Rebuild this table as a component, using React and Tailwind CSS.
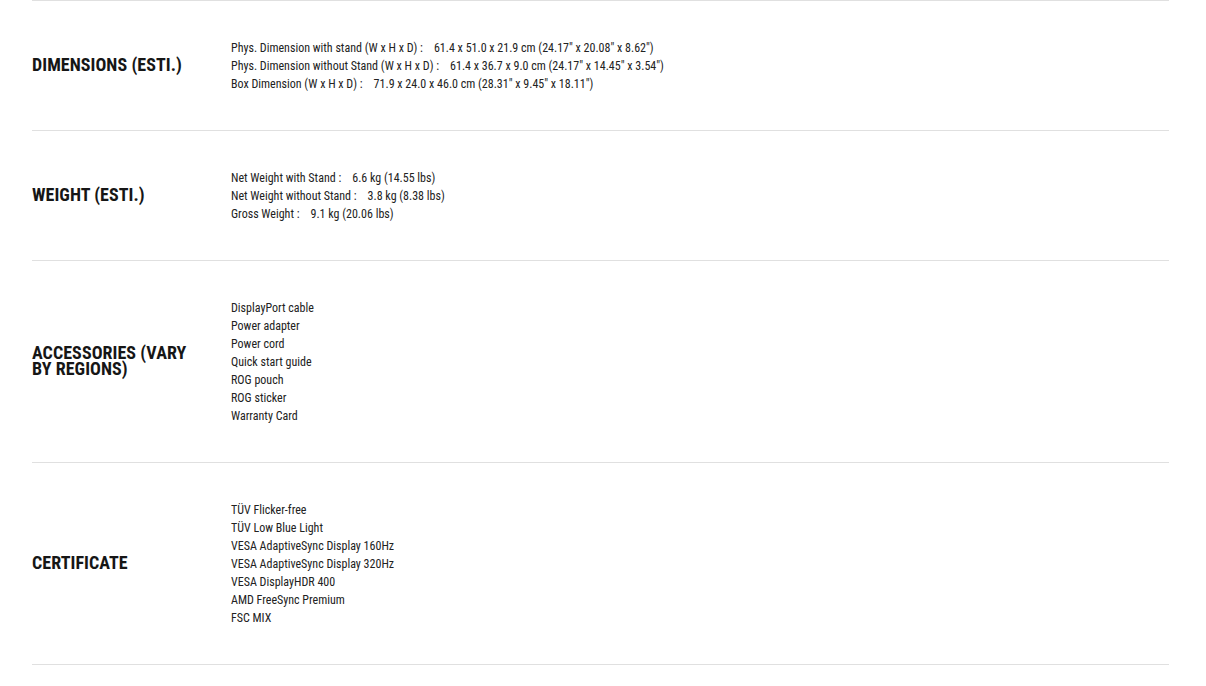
const specs = [
  {
    title: "Dimensions (Esti.)",
    items: [
      'Phys. Dimension with stand (W x H x D) :\u00a0\u00a0\u00a0 61.4 x 51.0 x 21.9 cm (24.17" x 20.08" x 8.62")',
      'Phys. Dimension without Stand (W x H x D) :\u00a0\u00a0\u00a0 61.4 x 36.7 x 9.0 cm (24.17" x 14.45" x 3.54")',
      'Box Dimension (W x H x D) :\u00a0\u00a0\u00a0 71.9 x 24.0 x 46.0 cm (28.31" x 9.45" x 18.11")',
    ],
  },
  {
    title: "Weight (Esti.)",
    items: [
      "Net Weight with Stand :\u00a0\u00a0\u00a0 6.6 kg (14.55 lbs)",
      "Net Weight without Stand :\u00a0\u00a0\u00a0 3.8 kg (8.38 lbs)",
      "Gross Weight :\u00a0\u00a0\u00a0 9.1 kg (20.06 lbs)",
    ],
  },
  {
    title: "Accessories (vary by regions)",
    items: [
      "DisplayPort cable",
      "Power adapter",
      "Power cord",
      "Quick start guide",
      "ROG pouch",
      "ROG sticker",
      "Warranty Card",
    ],
  },
  {
    title: "Certificate",
    items: [
      "TÜV Flicker-free",
      "TÜV Low Blue Light",
      "VESA AdaptiveSync Display 160Hz",
      "VESA AdaptiveSync Display 320Hz",
      "VESA DisplayHDR 400",
      "AMD FreeSync Premium",
      "FSC MIX",
    ],
  },
]

export default function App() {
  return (
    <div className="min-h-screen bg-white font-['Roboto_Condensed','Roboto',sans-serif]">
      <div className="ml-8 w-[1137px] border-t border-[#e0e0e0]">
        {specs.map((spec) => (
          <SpecRow key={spec.title} {...spec} />
        ))}
      </div>
    </div>
  )
}

// one spec row: bold label on the left, list of values on the right
function SpecRow({ title, items }) {
  return (
    <div className="flex items-center border-b border-[#e0e0e0] py-[37.5px]">
      <h3 className="mb-[2px] w-[162px] shrink-0 text-[18px] font-bold uppercase leading-[16px] tracking-[0.05px] text-[#161616]">
        {title}
      </h3>
      <ul className="ml-[37px] text-[12px] leading-[18px] text-[#222]">
        {items.map((item) => (
          <li key={item}>{item}</li>
        ))}
      </ul>
    </div>
  )
}
